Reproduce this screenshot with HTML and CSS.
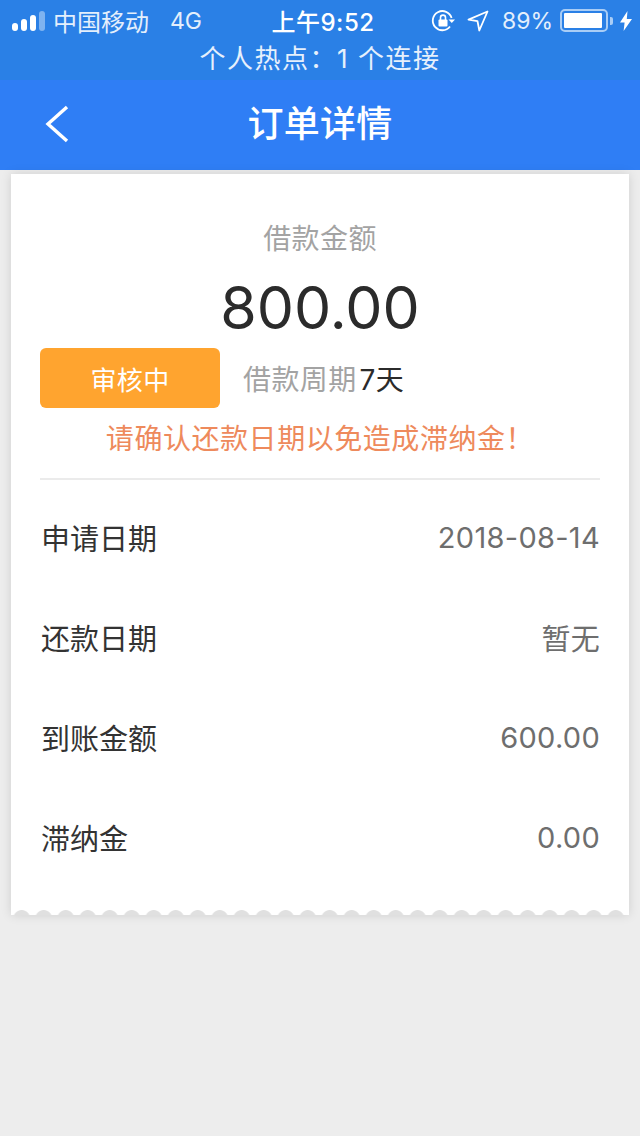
FILE: index.html
```html
<!DOCTYPE html>
<html lang="zh-CN">
<head>
<meta charset="utf-8">
<title>订单详情</title>
<link rel="stylesheet" href="styles.css">
</head>
<body>
<header class="status">
  <div class="status-row">
    <div class="status-left">
      <svg class="signal" width="34" height="20" viewBox="0 0 34 20"><rect x="0" y="12" width="6" height="8" rx="3" fill="#fff"/><rect x="9" y="8" width="6" height="12" rx="3" fill="#fff"/><rect x="18" y="4" width="6" height="16" rx="3" fill="#fff"/><rect x="27" y="0" width="6" height="20" rx="3" fill="#fff" fill-opacity=".4"/></svg>
      <span class="carrier">中国移动</span>
      <span class="net">4G</span>
    </div>
    <div class="clock">上午9:52</div>
    <div class="status-right">
      <svg class="lock" width="24" height="24" viewBox="0 0 24 24" fill="none"><path d="M19 17.5A9.6 9.6 0 1 1 20.6 9" stroke="#fff" stroke-width="1.8"/><path d="M17.5 10.5h6.5l-3.2 3.6z" fill="#fff"/><rect x="7.5" y="10.5" width="9" height="7" rx="1" fill="#fff"/><path d="M9.5 11V8.6a2.5 2.5 0 0 1 5 0V11" stroke="#fff" stroke-width="1.6"/></svg>
      <svg class="arrow" width="22" height="22" viewBox="0 0 22 22" fill="none"><path d="M20.5 1.5 1.5 9.6l9 1.6 1.8 9.3z" stroke="#fff" stroke-width="1.8" stroke-linejoin="round"/></svg>
      <span class="pct">89%</span>
      <span class="battery"><span class="battery-level"></span></span>
      <span class="battery-tip"></span>
      <svg class="bolt" width="12" height="20" viewBox="0 0 12 20"><path d="M7.5 0 0 11.5h4.6L3.6 20 12 8H6.8z" fill="#fff"/></svg>
    </div>
  </div>
  <div class="hotspot">个人热点：1 个连接</div>
</header>
<nav class="nav">
  <svg class="back" width="24" height="38" viewBox="0 0 24 38" fill="none"><path d="M22 2 3 19l19 17" stroke="#fff" stroke-width="3.4"/></svg>
  <h1 class="title">订单详情</h1>
</nav>
<main class="card">
  <section class="summary">
    <div class="label">借款金额</div>
    <div class="amount">800.00</div>
    <div class="meta">
      <span class="badge">审核中</span>
      <span class="period">借款周期<span class="period-value">7天</span></span>
    </div>
    <p class="notice">请确认还款日期以免造成滞纳金！</p>
  </section>
  <dl class="rows">
    <div class="row"><dt>申请日期</dt><dd>2018-08-14</dd></div>
    <div class="row"><dt>还款日期</dt><dd>暂无</dd></div>
    <div class="row"><dt>到账金额</dt><dd>600.00</dd></div>
    <div class="row"><dt>滞纳金</dt><dd>0.00</dd></div>
  </dl>
  <div class="scallop"></div>
</main>
</body>
</html>
```
FILE: styles.css
```css
* { box-sizing: border-box; }
html, body { margin: 0; padding: 0; }
body {
  width: 640px;
  height: 1136px;
  overflow: hidden;
  background: #ededed;
  font-family: Inter, "Noto Sans CJK SC", sans-serif;
  color: #333;
}
.status { height: 80px; background: #2a80e6; color: #fff; display: flex; flex-direction: column; }
.status-row {
  height: 41px;
  padding: 0 8px 0 12px;
  display: flex;
  align-items: center;
  justify-content: space-between;
  position: relative;
}
.status-left { display: flex; align-items: center; font-size: 24px; }
.signal { margin-right: 7px; }
.carrier { color: #e4effc; }
.net { margin-left: 21px; font-size: 23px; color: #e4effc; }
.clock { position: absolute; left: 6px; right: 0; text-align: center; font-size: 24px; font-weight: 500; letter-spacing: 0.5px; }
.status-right { display: flex; align-items: center; position: relative; z-index: 1; }
.lock { margin-right: 12px; }
.arrow { margin-right: 13px; }
.pct { font-size: 23px; color: #e4effc; margin-right: 7px; }
.battery {
  width: 48px;
  height: 23px;
  border: 2px solid #a9cdf6;
  border-radius: 5px;
  padding: 2px;
  display: flex;
}
.battery-level { width: 38px; background: #fff; border-radius: 1px; }
.battery-tip { width: 3px; height: 8px; background: #a9cdf6; margin: 0 7px 0 2px; border-radius: 0 2px 2px 0; }
.hotspot { text-align: center; font-size: 26px; line-height: 36px; color: #e6f0fc; letter-spacing: 1.5px; }
.nav {
  height: 90px;
  padding-bottom: 8px;
  background: #2f7ef5;
  display: flex;
  align-items: center;
  justify-content: center;
  position: relative;
}
.back { position: absolute; left: 45px; top: 25px; }
.title { margin: 0; color: #fff; font-size: 36px; font-weight: 500; letter-spacing: 0.3px; }
.card {
  width: 618px;
  height: 741px;
  margin: 4px 0 0 11px;
  padding: 0 29px;
  background: #fff;
  box-shadow: 0 0 10px rgba(0, 0, 0, .13);
  display: flex;
  flex-direction: column;
  position: relative;
}
.summary {
  height: 306px;
  border-bottom: 2px solid #ebebeb;
  display: flex;
  flex-direction: column;
  align-items: center;
}
.label { margin-top: 46px; font-size: 28px; line-height: 38px; color: #a3a3a3; letter-spacing: 0.4px; }
.amount { margin-top: 10px; font-size: 59px; line-height: 80px; color: #2b2b2b; }
.meta { align-self: stretch; display: flex; align-items: center; }
.badge {
  width: 180px;
  height: 60px;
  background: #ffa42f;
  border-radius: 6px;
  color: #fff;
  font-size: 26px;
  display: flex;
  align-items: center;
  justify-content: center;
  letter-spacing: 0.4px;
}
.period { margin-left: 23px; font-size: 28px; color: #a3a3a3; letter-spacing: 0.4px; }
.period-value { margin-left: 3px; color: #2b2b2b; }
.notice { margin: 10px 0 0; font-size: 28px; line-height: 42px; color: #ee8a5c; letter-spacing: 0.55px; }
.rows { margin: 7px 0 0; display: flex; flex-direction: column; }
.row { height: 100px; display: flex; align-items: center; justify-content: space-between; font-size: 29px; }
.row dt { color: #333; margin-left: 1px; }
.row dd { margin: 0; color: #6e6e6e; letter-spacing: 0.3px; }
.scallop {
  position: absolute;
  left: 0;
  right: 0;
  bottom: 0;
  height: 5px;
  background-image: radial-gradient(circle at 11px 8.5px, #e0e0e0 0, #e0e0e0 8px, transparent 8.8px);
  background-size: 22px 5px;
  background-position: -0.3px 0;
}
```
